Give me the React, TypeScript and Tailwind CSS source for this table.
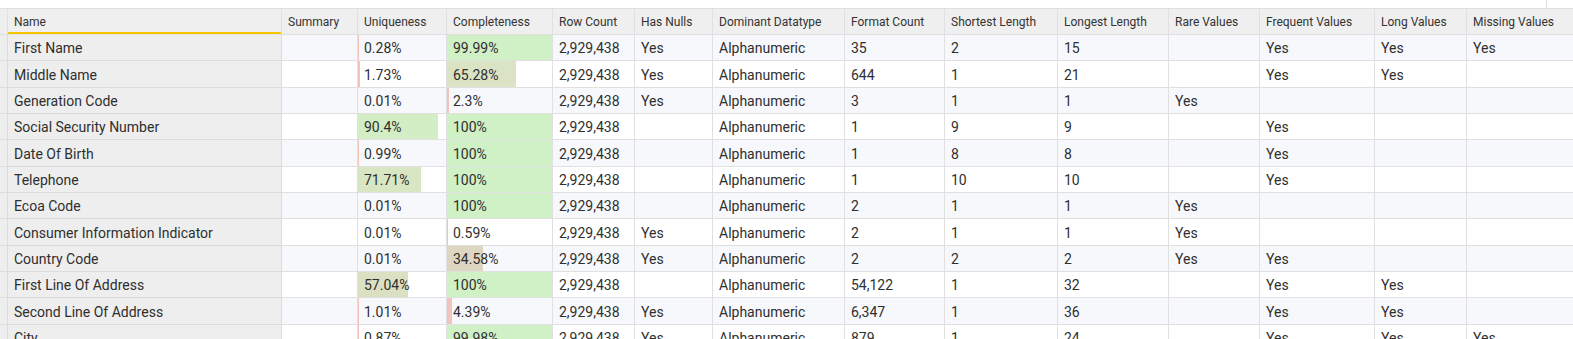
import React from "react";

type Row = {
  name: string;
  uniq: number;
  comp: number;
  nulls: string;
  fmt: string;
  shortest: string;
  longest: string;
  rare: string;
  freq: string;
  long: string;
  missing: string;
};

const rows: Row[] = [
  { name: "First Name", uniq: 0.28, comp: 99.99, nulls: "Yes", fmt: "35", shortest: "2", longest: "15", rare: "", freq: "Yes", long: "Yes", missing: "Yes" },
  { name: "Middle Name", uniq: 1.73, comp: 65.28, nulls: "Yes", fmt: "644", shortest: "1", longest: "21", rare: "", freq: "Yes", long: "Yes", missing: "" },
  { name: "Generation Code", uniq: 0.01, comp: 2.3, nulls: "Yes", fmt: "3", shortest: "1", longest: "1", rare: "Yes", freq: "", long: "", missing: "" },
  { name: "Social Security Number", uniq: 90.4, comp: 100, nulls: "", fmt: "1", shortest: "9", longest: "9", rare: "", freq: "Yes", long: "", missing: "" },
  { name: "Date Of Birth", uniq: 0.99, comp: 100, nulls: "", fmt: "1", shortest: "8", longest: "8", rare: "", freq: "Yes", long: "", missing: "" },
  { name: "Telephone", uniq: 71.71, comp: 100, nulls: "", fmt: "1", shortest: "10", longest: "10", rare: "", freq: "Yes", long: "", missing: "" },
  { name: "Ecoa Code", uniq: 0.01, comp: 100, nulls: "", fmt: "2", shortest: "1", longest: "1", rare: "Yes", freq: "", long: "", missing: "" },
  { name: "Consumer Information Indicator", uniq: 0.01, comp: 0.59, nulls: "Yes", fmt: "2", shortest: "1", longest: "1", rare: "Yes", freq: "", long: "", missing: "" },
  { name: "Country Code", uniq: 0.01, comp: 34.58, nulls: "Yes", fmt: "2", shortest: "2", longest: "2", rare: "Yes", freq: "Yes", long: "", missing: "" },
  { name: "First Line Of Address", uniq: 57.04, comp: 100, nulls: "", fmt: "54,122", shortest: "1", longest: "32", rare: "", freq: "Yes", long: "Yes", missing: "" },
  { name: "Second Line Of Address", uniq: 1.01, comp: 4.39, nulls: "Yes", fmt: "6,347", shortest: "1", longest: "36", rare: "", freq: "Yes", long: "Yes", missing: "" },
  { name: "City", uniq: 0.87, comp: 99.98, nulls: "Yes", fmt: "879", shortest: "1", longest: "24", rare: "", freq: "Yes", long: "Yes", missing: "Yes" },
];

const stops: [number, [number, number, number]][] = [
  [0, [244, 194, 188]],
  [35, [221, 214, 192]],
  [57, [220, 224, 194]],
  [72, [216, 230, 196]],
  [100, [208, 240, 198]],
];

function barColor(p: number): string {
  for (let i = 0; i < stops.length - 1; i++) {
    const [a, ca] = stops[i];
    const [b, cb] = stops[i + 1];
    if (p >= a && p <= b) {
      const t = (p - a) / (b - a);
      const c = ca.map((v, k) => Math.round(v + (cb[k] - v) * t));
      return `rgb(${c[0]},${c[1]},${c[2]})`;
    }
  }
  return "rgb(208,240,198)";
}

const GRID =
  "grid grid-cols-[8px_274px_76px_89px_106px_82px_78px_132px_100px_113px_111px_91px_115px_92px_160px]";

const headers = [
  "Summary",
  "Uniqueness",
  "Completeness",
  "Row Count",
  "Has Nulls",
  "Dominant Datatype",
  "Format Count",
  "Shortest Length",
  "Longest Length",
  "Rare Values",
  "Frequent Values",
  "Long Values",
  "Missing Values",
];

function Cell({ children }: { children?: React.ReactNode }) {
  return (
    <div className="flex items-center border-r border-b border-[#e0e0e0] px-[6px] pt-[2px] whitespace-nowrap overflow-hidden">
      {children}
    </div>
  );
}

function BarCell({ value }: { value: number }) {
  return (
    <div className="relative flex items-center border-r border-b border-[#e0e0e0] pt-[2px] whitespace-nowrap overflow-hidden">
      <div
        className="absolute left-0 top-0 bottom-0"
        style={{ width: `${value}%`, backgroundColor: barColor(value) }}
      />
      <span className="relative px-[6px]">{value}%</span>
    </div>
  );
}

export default function App() {
  return (
    <div
      className="w-[1573px] h-[339px] overflow-hidden bg-white text-[#2f2f2f]"
      style={{ fontFamily: "Roboto, 'Liberation Sans', sans-serif" }}
    >
      <div className="flex h-[8px]">
        <div className="w-[1546px]" />
        <div className="border-l border-[#dddddd] h-full" />
      </div>
      <div className={`${GRID} h-[27px] border-t border-[#e0e0e0] bg-[#efefef] text-[12px] text-[#333333]`}>
        <div className="border-r border-b border-[#e0e0e0] bg-[#eeeeee]" />
        <div className="flex items-center border-r border-b border-[#e0e0e0] px-[6px] shadow-[inset_0_-2px_0_#f5c400]">
          Name
        </div>
        {headers.map((h) => (
          <div
            key={h}
            className="flex items-center border-r border-b border-[#e0e0e0] px-[6px] whitespace-nowrap overflow-hidden"
          >
            {h}
          </div>
        ))}
      </div>
      {rows.map((r, i) => (
        <div
          key={r.name}
          className={`${GRID} h-[26.35px] text-[14px] ${i % 2 === 0 ? "bg-[#f7f8fc]" : "bg-white"}`}
        >
          <div className="border-r border-b border-[#dcdcdc] bg-[#eeeeee]" />
          <div className="flex items-center border-r border-b border-[#dcdcdc] bg-[#eeeeee] px-[6px] pt-[2px] whitespace-nowrap overflow-hidden">
            {r.name}
          </div>
          <Cell />
          <BarCell value={r.uniq} />
          <BarCell value={r.comp} />
          <Cell>2,929,438</Cell>
          <Cell>{r.nulls}</Cell>
          <Cell>Alphanumeric</Cell>
          <Cell>{r.fmt}</Cell>
          <Cell>{r.shortest}</Cell>
          <Cell>{r.longest}</Cell>
          <Cell>{r.rare}</Cell>
          <Cell>{r.freq}</Cell>
          <Cell>{r.long}</Cell>
          <Cell>{r.missing}</Cell>
        </div>
      ))}
    </div>
  );
}
